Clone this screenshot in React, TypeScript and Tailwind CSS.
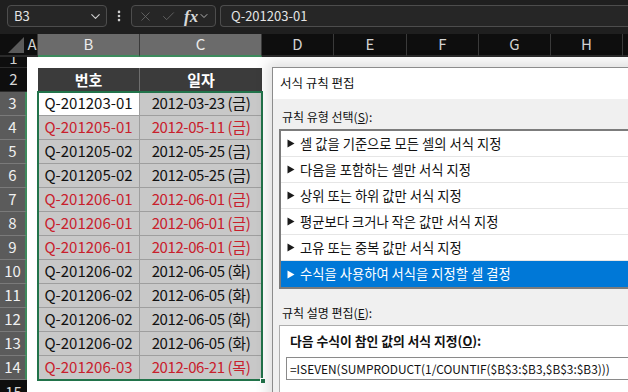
import React from 'react';
import { ChevronDown, X, Check, EllipsisVertical } from 'lucide-react';

type Row = { n: number; id: string; date: string; red?: boolean };

const rows: Row[] = [
  { n: 3, id: 'Q-201203-01', date: '2012-03-23 (금)' },
  { n: 4, id: 'Q-201205-01', date: '2012-05-11 (금)', red: true },
  { n: 5, id: 'Q-201205-02', date: '2012-05-25 (금)' },
  { n: 6, id: 'Q-201205-02', date: '2012-05-25 (금)' },
  { n: 7, id: 'Q-201206-01', date: '2012-06-01 (금)', red: true },
  { n: 8, id: 'Q-201206-01', date: '2012-06-01 (금)', red: true },
  { n: 9, id: 'Q-201206-01', date: '2012-06-01 (금)', red: true },
  { n: 10, id: 'Q-201206-02', date: '2012-06-05 (화)' },
  { n: 11, id: 'Q-201206-02', date: '2012-06-05 (화)' },
  { n: 12, id: 'Q-201206-02', date: '2012-06-05 (화)' },
  { n: 13, id: 'Q-201206-02', date: '2012-06-05 (화)' },
  { n: 14, id: 'Q-201206-03', date: '2012-06-21 (목)', red: true },
];

const cols = [
  { label: 'A', w: 'w-[11px]', sel: false },
  { label: 'B', w: 'w-[102px]', sel: true },
  { label: 'C', w: 'w-[122px]', sel: true },
  { label: 'D', w: 'w-[72px]', sel: false },
  { label: 'E', w: 'w-[73px]', sel: false },
  { label: 'F', w: 'w-[72px]', sel: false },
  { label: 'G', w: 'w-[72px]', sel: false },
  { label: 'H', w: 'w-[72px]', sel: false },
  { label: '', w: 'w-[72px]', sel: false },
];

const rules = [
  '셀 값을 기준으로 모든 셀의 서식 지정',
  '다음을 포함하는 셀만 서식 지정',
  '상위 또는 하위 값만 서식 지정',
  '평균보다 크거나 작은 값만 서식 지정',
  '고유 또는 중복 값만 서식 지정',
  '수식을 사용하여 서식을 지정할 셀 결정',
];

const Arrow = ({ white }: { white?: boolean }) => (
  <svg width="8" height="9" viewBox="0 0 8 9" className="shrink-0">
    <path d="M0.5 0.5 L7.5 4.5 L0.5 8.5 Z" fill={white ? '#ffffff' : '#1a1a1a'} />
  </svg>
);

export default function App() {
  return (
    <div className="relative w-[628px] h-[392px] overflow-hidden bg-[#1f1f1f] font-['Noto_Sans_CJK_KR','Noto_Sans',sans-serif]">
      {/* formula bar */}
      <div className="h-[34px] flex items-start pt-[5px] pl-[7px] gap-[4px] text-[13px] text-[#e4e4e4]">
        <div className="w-[100px] h-[22px] rounded-[4px] border border-[#4d4d4d] bg-[#262626] flex items-center justify-between pl-[6px] pr-[3px]">
          <span>B3</span>
          <ChevronDown className="w-[15px] h-[15px] text-[#cfcfcf]" strokeWidth={1.8} />
        </div>
        <div className="w-[16px] h-[22px] flex items-center justify-center">
          <EllipsisVertical className="w-[14px] h-[14px] text-[#cfcfcf]" strokeWidth={2.5} />
        </div>
        <div className="w-[85px] h-[22px] rounded-[4px] border border-[#4d4d4d] bg-[#262626] flex items-center pl-[6px] gap-[8px]">
          <X className="w-[15px] h-[15px] text-[#6c6c6c]" strokeWidth={1.3} />
          <Check className="w-[15px] h-[15px] text-[#6c6c6c]" strokeWidth={1.3} />
          <span className="flex items-center">
            <span className="font-['Liberation_Serif',serif] italic font-bold text-[17px] text-[#d8d8d8] leading-none">fx</span>
            <ChevronDown className="w-[12px] h-[12px] text-[#bdbdbd]" strokeWidth={1.8} />
          </span>
        </div>
        <div className="flex-1 h-[22px] rounded-l-[4px] border border-r-0 border-[#4d4d4d] bg-[#262626] flex items-center pl-[10px]">
          Q-201203-01
        </div>
      </div>

      {/* column headers */}
      <div className="flex h-[23px] bg-[#0e0e0e] text-[15px]">
        <div className="w-[27px] shrink-0 border-b-2 border-[#2a2a2a] flex items-end justify-end pr-[3px] pb-[2px]">
          <svg width="16" height="16" viewBox="0 0 16 16">
            <path d="M16 0 L16 16 L0 16 Z" fill="#5a5a5a" />
          </svg>
        </div>
        {cols.map((c, i) => (
          <div
            key={i}
            className={`${c.w} shrink-0 overflow-hidden flex items-center justify-center border-r border-[#3a3a3a] ${
              c.sel ? 'bg-[#6b6b6b] text-[#ececec] border-b-2 border-b-[#3d8a5c]' : 'text-[#d2d2d2] border-b-2 border-b-[#2a2a2a]'
            }`}
          >
            {c.label}
          </div>
        ))}
      </div>

      {/* sheet body */}
      <div className="flex h-[400px]">
        <div className="w-[27px] shrink-0 flex flex-col text-[15px]">
          <div className="h-[11px] bg-[#0e0e0e] text-[#cfcfcf] border-b border-[#2c2c2c] overflow-hidden flex justify-center">
            <span className="leading-[12px] -mt-[5px]">1</span>
          </div>
          <div className="h-[24px] bg-[#0e0e0e] text-[#d6d6d6] flex items-center justify-center border-b border-[#2c2c2c]">2</div>
          {rows.map((r) => (
            <div
              key={r.n}
              className="h-[24px] bg-[#5b5b5b] text-[#f0f0f0] flex items-center justify-center border-b border-[#7a7a7a] border-r-2 border-r-[#3d8a5c]"
            >
              {r.n}
            </div>
          ))}
          <div className="h-[24px] bg-[#0e0e0e] text-[#d6d6d6] flex items-center justify-center">15</div>
        </div>

        <div className="flex-1 bg-white pl-[11px] pt-[11px] text-[15px]">
          <div className="w-[224px]">
            <div className="flex h-[24px] bg-[#3b3b3b] text-white font-bold">
              <div className="w-[102px] flex items-center justify-center border-r border-[#6e6e6e]">번호</div>
              <div className="w-[122px] flex items-center justify-center">일자</div>
            </div>
            <div className="relative outline-2 outline-solid outline-[#21734a] -outline-offset-1">
              {rows.map((r, i) => (
                <div key={r.n} className={`flex h-[24px] ${r.red ? 'text-[#c8202c]' : 'text-[#111]'}`}>
                  <div
                    className={`w-[102px] flex items-center justify-center border-r border-b border-[#9e9e9e] ${
                      i === 0 ? 'bg-white' : 'bg-[#c8c8c8]'
                    }`}
                  >
                    {r.id}
                  </div>
                  <div className="w-[122px] flex items-center justify-center border-b border-[#9e9e9e] bg-[#c8c8c8] tracking-[-0.4px]">
                    {r.date}
                  </div>
                </div>
              ))}
              <div className="absolute -right-[4px] -bottom-[4px] w-[6px] h-[6px] bg-[#21734a] border border-white" />
            </div>
          </div>
        </div>
      </div>

      {/* dialog */}
      <div className="absolute left-[272px] top-[67px] w-[420px] h-[340px] border border-[#8c8c8c] bg-[#f0f0f0] shadow-[0_0_12px_5px_rgba(0,0,0,0.12)] text-[12px] text-[#111]">
        <div className="h-[31px] bg-white flex items-center pl-[7px] text-[12.5px]">서식 규칙 편집</div>
        <div className="pl-[6px]">
          <div className="pt-[10px] pl-[3px] h-[26px] leading-[16px]">
            규칙 유형 선택(<span className="underline">S</span>):
          </div>
          <div className="mt-[4px] border-2 border-[#7c7c7c] bg-white text-[13.3px]">
            {rules.map((t, i) => {
              const sel = i === rules.length - 1;
              return (
                <div
                  key={t}
                  className={`h-[26px] flex items-center gap-[5px] pl-[6px] ${
                    sel ? 'bg-[#0078d7] text-white' : 'border-b border-[#e6e6e6]'
                  }`}
                >
                  <Arrow white={sel} />
                  <span>{t}</span>
                </div>
              );
            })}
          </div>
          <div className="mt-[16px] pl-[3px] leading-[16px]">
            규칙 설명 편집(<span className="underline">E</span>):
          </div>
          <div className="mt-[4px] h-[80px] border border-[#adadad] bg-white pl-[6px] pt-[7px]">
            <div className="pl-[4px] font-bold leading-[16px] text-[12.8px]">
              다음 수식이 참인 값의 서식 지정(<span className="underline">O</span>):
            </div>
            <div className="mt-[8px] h-[23px] border border-[#8a8a8a] bg-white flex items-center pl-[3px] text-[11.9px]">
              =ISEVEN(SUMPRODUCT(1/COUNTIF($B$3:$B3,$B$3:$B3)))
            </div>
          </div>
        </div>
      </div>
    </div>
  );
}
